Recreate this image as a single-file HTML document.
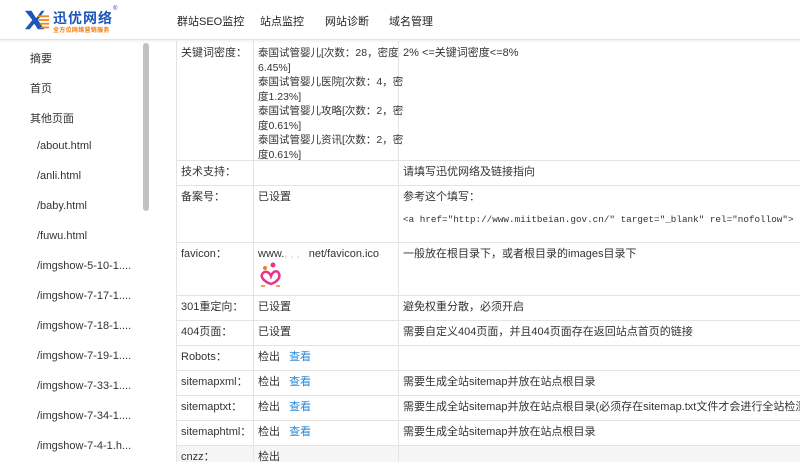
<!DOCTYPE html>
<html><head><meta charset="utf-8"><style>
*{margin:0;padding:0;box-sizing:border-box}
body{width:800px;height:462px;overflow:hidden;background:#fff;font-family:"Liberation Sans","Noto Sans CJK SC",sans-serif;font-size:11px;color:#333;position:relative}
.wrap{position:absolute;left:0;top:0;width:800px;height:462px;overflow:hidden}
.hd{position:absolute;left:0;top:0;width:800px;height:40px;background:#fff;border-bottom:1px solid #e2e2e2;box-shadow:0 1px 3px rgba(0,0,0,.08);z-index:2}
.nav{position:absolute;top:13px;font-size:11px;color:#222}
.side{position:absolute;left:0;top:41px;width:150px;height:421px}
.side div{position:absolute;font-size:11px;color:#333;white-space:nowrap}
.sb{position:absolute;left:143px;top:43px;width:6px;height:168px;background:#c1c1c1;border-radius:3px}
.t{position:absolute;font-size:11px;color:#333;white-space:nowrap;line-height:15px}
.h{position:absolute;height:1px;background:#e4e4e4;left:176px;width:624px}
.v{position:absolute;width:1px;background:#e4e4e4}
a{color:#2a8ad8;text-decoration:none}
.mono{font-family:"Liberation Mono",monospace;font-size:9.3px}
</style></head><body><div class="wrap">
<div class="hd">
 <svg style="position:absolute;left:24px;top:9px" width="26" height="22" viewBox="0 0 28 22">
  <path d="M1 1h7l5 8 6-8h3l-7 10 7 10h-7l-4-6-5 6H1l8-10z" fill="#1e56b8"/>
  <rect x="15" y="6" width="12" height="2" fill="#f08a1c"/><rect x="16" y="10" width="11" height="2" fill="#f08a1c"/><rect x="17" y="14" width="10" height="2" fill="#f08a1c"/><rect x="18" y="18" width="9" height="2" fill="#f08a1c"/>
 </svg>
 <div style="position:absolute;left:53px;top:8px;font-size:14px;font-weight:bold;color:#1e56b8;letter-spacing:1px">迅优网络</div>
 <div style="position:absolute;left:113px;top:6px;font-size:6px;color:#1e56b8">®</div>
 <div style="position:absolute;left:53px;top:25px;font-size:6px;color:#f07a10;font-weight:bold;letter-spacing:.3px">全方位网络营销服务</div>
 <div class="nav" style="left:177px">群站SEO监控</div>
 <div class="nav" style="left:260px">站点监控</div>
 <div class="nav" style="left:325px">网站诊断</div>
 <div class="nav" style="left:389px">域名管理</div>
</div>
<div class="side">
 <div style="left:30px;top:9px">摘要</div>
 <div style="left:30px;top:39px">首页</div>
 <div style="left:30px;top:69px">其他页面</div>
 <div style="left:37px;top:99px">/about.html</div>
 <div style="left:37px;top:129px">/anli.html</div>
 <div style="left:37px;top:159px">/baby.html</div>
 <div style="left:37px;top:189px">/fuwu.html</div>
 <div style="left:37px;top:219px">/imgshow-5-10-1....</div>
 <div style="left:37px;top:249px">/imgshow-7-17-1....</div>
 <div style="left:37px;top:279px">/imgshow-7-18-1....</div>
 <div style="left:37px;top:309px">/imgshow-7-19-1....</div>
 <div style="left:37px;top:339px">/imgshow-7-33-1....</div>
 <div style="left:37px;top:369px">/imgshow-7-34-1....</div>
 <div style="left:37px;top:399px">/imgshow-7-4-1.h...</div>
</div>
<div class="sb"></div>

<div style="position:absolute;left:176px;top:445px;width:624px;height:17px;background:#f5f5f5"></div>
<div class="v" style="left:176px;top:41px;height:421px"></div>
<div class="v" style="left:253px;top:41px;height:421px"></div>
<div class="v" style="left:398px;top:41px;height:421px"></div>
<div class="h" style="top:160px"></div><div class="h" style="top:185px"></div><div class="h" style="top:242px"></div><div class="h" style="top:295px"></div><div class="h" style="top:320px"></div><div class="h" style="top:345px"></div><div class="h" style="top:370px"></div><div class="h" style="top:395px"></div><div class="h" style="top:420px"></div><div class="h" style="top:445px"></div>

<div class="t" style="left:181px;top:46px">关键词密度：</div>
<div class="t" style="left:258px;top:46px;line-height:14.5px;font-size:10.5px">泰国试管婴儿[次数：28，密度<br>6.45%]<br>泰国试管婴儿医院[次数：4，密<br>度1.23%]<br>泰国试管婴儿攻略[次数：2，密<br>度0.61%]<br>泰国试管婴儿资讯[次数：2，密<br>度0.61%]</div>
<div class="t" style="left:403px;top:46px">2% &lt;=关键词密度&lt;=8%</div>

<div class="t" style="left:181px;top:165px">技术支持：</div>
<div class="t" style="left:403px;top:165px">请填写迅优网络及链接指向</div>

<div class="t" style="left:181px;top:190px">备案号：</div>
<div class="t" style="left:258px;top:190px">已设置</div>
<div class="t" style="left:403px;top:190px">参考这个填写：</div>
<div class="t mono" style="left:403px;top:212px">&lt;a href="http://www.miitbeian.gov.cn/" target="_blank" rel="nofollow"&gt;</div>

<div class="t" style="left:181px;top:247px">favicon：</div>
<div class="t" style="left:258px;top:247px">www.<span style="color:#ccc">, , ,</span> &nbsp;&nbsp;net/favicon.ico</div>
<svg style="position:absolute;left:258px;top:262px" width="26" height="28" viewBox="0 0 26 28">
 <circle cx="15" cy="3" r="2.5" fill="#e8358a"/><circle cx="7" cy="6" r="2" fill="#f07a2a"/>
 <path d="M5 11c-4 4 2 9 8 11 6-2 11-7 7-12-3-2-6 1-7 4-1-3-5-6-8-3z" fill="none" stroke="#e8358a" stroke-width="2.5"/>
 <path d="M3 24h4M18 24h4" stroke="#f07a2a" stroke-width="1.5"/>
</svg>
<div class="t" style="left:403px;top:247px">一般放在根目录下，或者根目录的images目录下</div>

<div class="t" style="left:181px;top:300px">301重定向：</div><div class="t" style="left:258px;top:300px">已设置</div><div class="t" style="left:403px;top:300px">避免权重分散，必须开启</div>
<div class="t" style="left:181px;top:325px">404页面：</div><div class="t" style="left:258px;top:325px">已设置</div><div class="t" style="left:403px;top:325px">需要自定义404页面，并且404页面存在返回站点首页的链接</div>
<div class="t" style="left:181px;top:350px">Robots：</div><div class="t" style="left:258px;top:350px">检出 &nbsp;&nbsp;<a>查看</a></div>
<div class="t" style="left:181px;top:375px">sitemapxml：</div><div class="t" style="left:258px;top:375px">检出 &nbsp;&nbsp;<a>查看</a></div><div class="t" style="left:403px;top:375px">需要生成全站sitemap并放在站点根目录</div>
<div class="t" style="left:181px;top:400px">sitemaptxt：</div><div class="t" style="left:258px;top:400px">检出 &nbsp;&nbsp;<a>查看</a></div><div class="t" style="left:403px;top:400px;width:397px;overflow:hidden">需要生成全站sitemap并放在站点根目录(必须存在sitemap.txt文件才会进行全站检测，否则只有</div>
<div class="t" style="left:181px;top:425px">sitemaphtml：</div><div class="t" style="left:258px;top:425px">检出 &nbsp;&nbsp;<a>查看</a></div><div class="t" style="left:403px;top:425px">需要生成全站sitemap并放在站点根目录</div>
<div class="t" style="left:181px;top:450px">cnzz：</div><div class="t" style="left:258px;top:450px">检出</div>
</div></body></html>
